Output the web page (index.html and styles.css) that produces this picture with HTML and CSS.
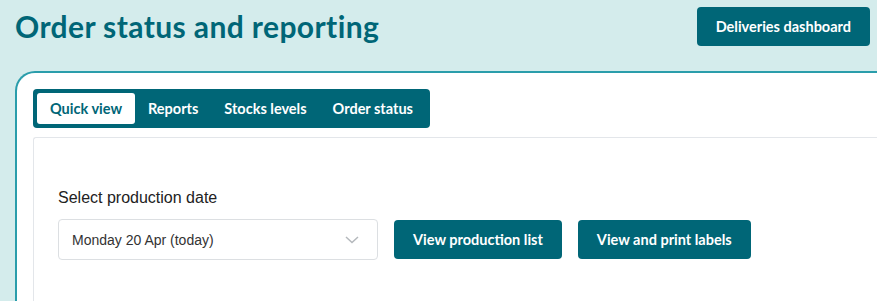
FILE: index.html
```html
<!doctype html>
<html lang="en-GB">
	<head>
		<meta charset="utf-8">
		<meta name="viewport" content="width=device-width, initial-scale=1">
		<title>Order status and reporting</title>
		<link rel="stylesheet" href="styles.css">
	</head>
	<body>

		<header class="top">
			<h1>Order status and reporting</h1>
			<button class="btn">Deliveries dashboard</button>
		</header>

		<section class="panel">

			<nav class="tabs">
				<button class="tab active">Quick view</button>
				<button class="tab">Reports</button>
				<button class="tab">Stocks levels</button>
				<button class="tab">Order status</button>
			</nav>

			<div class="card">
				<label class="label" for="date">Select production date</label>
				<div class="row">
					<div class="select">
						<span id="date">Monday 20 Apr (today)</span>
						<svg class="chevron" width="14" height="8" viewBox="0 0 14 8"><path d="M1 1 L7 6.5 L13 1" fill="none" stroke="#b4b8bc" stroke-width="1.5"/></svg>
					</div>
					<button class="btn">View production list</button>
					<button class="btn">View and print labels</button>
				</div>
			</div>

		</section>

	</body>
</html>
```

FILE: styles.css
```css
/* -------------------------------------------------- */

:root
{
	--background: #d4ecec;
	--brand: #006677;
	--edge: #2a9dab;
	--line: #e3e6ea;
}

*, *::before, *::after { box-sizing: border-box; }

html,
body
{
	height: 301px;
	overflow: hidden;
}

body
{
	margin: 0;
	padding: 7px 0 0 15px;

	font-family: Lato, 'Open Sans', sans-serif;
	background: var( --background );
}

/* -------------------------------------------------- */

.top
{
	display: flex;
	justify-content: space-between;
	align-items: flex-start;
	padding-right: 7px;
}

h1
{
	margin: 0;
	padding-top: 1px;
	font-size: 30px;
	font-weight: 700;
	line-height: 36px;
	letter-spacing: 0.4px;
	color: var( --brand );
}

.btn
{
	height: 39px;
	padding: 0 19px;

	font-family: inherit;
	font-size: 14.5px;
	font-weight: 700;
	color: white;

	background: var( --brand );
	border: none;
	border-radius: 4px;
}

/* -------------------------------------------------- */

.panel
{
	margin-top: 25px;
	margin-right: -20px;
	height: 240px;
	padding: 16px 0 0 16px;

	background: white;
	border: 2px solid var( --edge );
	border-right: none;
	border-bottom: none;
	border-radius: 20px 0 0 0;
}

.tabs
{
	display: inline-flex;
	padding: 4px;

	background: var( --brand );
	border-radius: 4px;
}

.tab
{
	height: 31px;
	padding: 0 13px;

	font-family: inherit;
	font-size: 14.5px;
	font-weight: 700;
	color: white;

	background: none;
	border: none;
	border-radius: 3px;
}

.tab.active
{
	background: white;
	color: var( --brand );
}

/* -------------------------------------------------- */

.card
{
	margin-top: 9px;
	height: 180px;
	padding: 50px 0 0 24px;

	border: 1px solid var( --line );
	border-right: none;
	border-bottom: none;
	border-radius: 3px 0 0 0;
}

.label
{
	display: block;
	font-family: 'Liberation Sans', Arial, sans-serif;
	font-size: 16px;
	line-height: 20px;
	color: #222;
}

.row
{
	display: flex;
	align-items: center;
	gap: 16px;
	margin-top: 11px;
}

.select
{
	display: flex;
	justify-content: space-between;
	align-items: center;
	width: 320px;
	height: 41px;
	padding: 0 18px 0 13px;

	font-family: 'Liberation Sans', Arial, sans-serif;
	font-size: 14px;
	color: #333;

	border: 1px solid #dcdfe2;
	border-radius: 4px;
}

/* -------------------------------------------------- */
```
